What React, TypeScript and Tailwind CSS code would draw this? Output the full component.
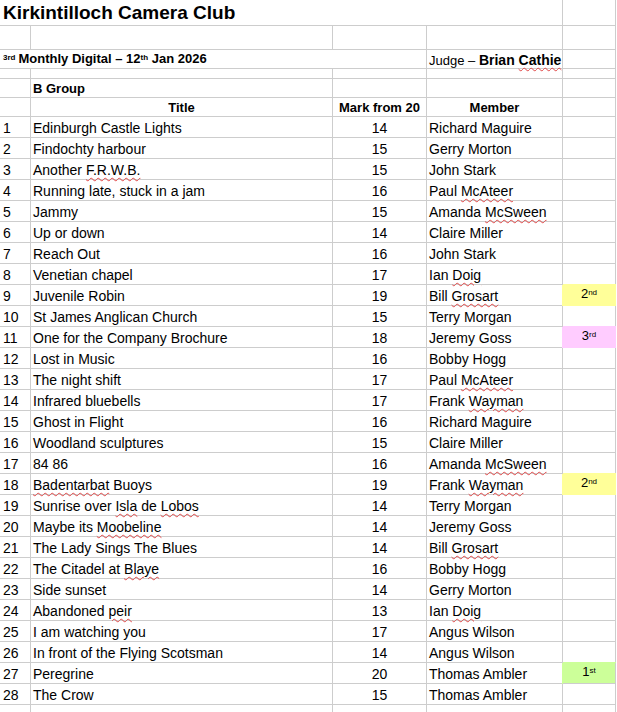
import type { ReactNode } from 'react';

type Entry = {
  title: string;
  mark: number;
  member: string;
  place?: 'first' | 'second' | 'third';
};

const ENTRIES: Entry[] = [
  { title: 'Edinburgh Castle Lights', mark: 14, member: 'Richard Maguire' },
  { title: 'Findochty harbour', mark: 15, member: 'Gerry Morton' },
  { title: 'Another F.R.W.B.', mark: 15, member: 'John Stark' },
  { title: 'Running late, stuck in a jam', mark: 16, member: 'Paul McAteer' },
  { title: 'Jammy', mark: 15, member: 'Amanda McSween' },
  { title: 'Up or down', mark: 14, member: 'Claire Miller' },
  { title: 'Reach Out', mark: 16, member: 'John Stark' },
  { title: 'Venetian chapel', mark: 17, member: 'Ian Doig' },
  { title: 'Juvenile Robin', mark: 19, member: 'Bill Grosart', place: 'second' },
  { title: 'St James Anglican Church', mark: 15, member: 'Terry Morgan' },
  { title: 'One for the Company Brochure', mark: 18, member: 'Jeremy Goss', place: 'third' },
  { title: 'Lost in Music', mark: 16, member: 'Bobby Hogg' },
  { title: 'The night shift', mark: 17, member: 'Paul McAteer' },
  { title: 'Infrared bluebells', mark: 17, member: 'Frank Wayman' },
  { title: 'Ghost in Flight', mark: 16, member: 'Richard Maguire' },
  { title: 'Woodland sculptures', mark: 15, member: 'Claire Miller' },
  { title: '84 86', mark: 16, member: 'Amanda McSween' },
  { title: 'Badentarbat Buoys', mark: 19, member: 'Frank Wayman', place: 'second' },
  { title: 'Sunrise over Isla de Lobos', mark: 14, member: 'Terry Morgan' },
  { title: 'Maybe its Moobeline', mark: 14, member: 'Jeremy Goss' },
  { title: 'The Lady Sings The Blues', mark: 14, member: 'Bill Grosart' },
  { title: 'The Citadel at Blaye', mark: 16, member: 'Bobby Hogg' },
  { title: 'Side sunset', mark: 14, member: 'Gerry Morton' },
  { title: 'Abandoned peir', mark: 13, member: 'Ian Doig' },
  { title: 'I am watching you', mark: 17, member: 'Angus Wilson' },
  { title: 'In front of the Flying Scotsman', mark: 14, member: 'Angus Wilson' },
  { title: 'Peregrine', mark: 20, member: 'Thomas Ambler', place: 'first' },
  { title: 'The Crow', mark: 15, member: 'Thomas Ambler' },
];

// words the spell checker flags with a red squiggle
const MISSPELT = new Set([
  'F.R.W.B.',
  'McAteer',
  'McSween',
  'Doig',
  'Grosart',
  'Wayman',
  'Badentarbat',
  'Isla',
  'Lobos',
  'Moobeline',
  'Blaye',
  'peir',
  'Cathie',
]);

const squiggle =
  'underline decoration-wavy decoration-[#e04848] decoration-1 underline-offset-[2px]';

function Marked({ text }: { text: string }) {
  const words = text.split(' ');
  return (
    <span>
      {words.map((w, i) => (
        <span key={i}>
          {i > 0 ? ' ' : ''}
          {MISSPELT.has(w) ? <span className={squiggle}>{w}</span> : w}
        </span>
      ))}
    </span>
  );
}

function Sup({ children }: { children: ReactNode }) {
  return <span className="relative -top-[3px] text-[8px]">{children}</span>;
}

const PLACES = {
  first: { n: '1', suffix: 'st', cls: 'bg-[#ccff99] border-[#ccff99] shadow-[0_-1px_0_#ccff99,-1px_0_0_#ccff99]' },
  second: { n: '2', suffix: 'nd', cls: 'bg-[#ffff99] border-[#ffff99] shadow-[0_-1px_0_#ffff99,-1px_0_0_#ffff99]' },
  third: { n: '3', suffix: 'rd', cls: 'bg-[#ffccff] border-[#ffccff] shadow-[0_-1px_0_#ffccff,-1px_0_0_#ffccff]' },
};

const cell = 'flex items-end whitespace-nowrap border-r border-b border-[#cdcdcd]';

export default function App() {
  return (
    <div className="min-h-[712px] w-[617px] overflow-hidden bg-white font-['Liberation_Sans',Arial,sans-serif] text-black">
      <div className="grid w-[616px] grid-cols-[31px_302px_94px_136px_53px]">
        {/* row 1: club name */}
        <div className={`${cell} col-span-4 h-[26px] pb-px pl-[3px] text-[19px] font-bold leading-[22px]`}>
          Kirkintilloch Camera Club
        </div>
        <div className={`${cell} h-[26px]`} />

        {/* row 2: blank */}
        {[0, 1, 2, 3, 4].map((i) => (
          <div key={`b2-${i}`} className={`${cell} h-[24px]`} />
        ))}

        {/* row 3: competition + judge */}
        <div className={`${cell} col-span-3 h-[19px] pl-[3px] text-[13px] font-bold leading-[15px]`}>
          <span>
            <Sup>3rd</Sup>
            <span className="ml-[3px]">
              Monthly Digital – 12<Sup>th</Sup> Jan 2026
            </span>
          </span>
        </div>
        <div className={`${cell} h-[19px] pl-[2px] text-[13px] leading-[15px]`}>
          <span>
            Judge –{' '}
            <span className="text-[14px] font-bold">
              Brian <span className={squiggle}>Cathie</span>
            </span>
          </span>
        </div>
        <div className={`${cell} h-[19px]`} />

        {/* row 4: thin spacer */}
        {[0, 1, 2, 3, 4].map((i) => (
          <div key={`b4-${i}`} className={`${cell} h-[10px]`} />
        ))}

        {/* row 5: group */}
        <div className={`${cell} h-[19px]`} />
        <div className={`${cell} h-[19px] pb-px pl-[2px] text-[13px] font-bold leading-[15px]`}>B Group</div>
        <div className={`${cell} h-[19px]`} />
        <div className={`${cell} h-[19px]`} />
        <div className={`${cell} h-[19px]`} />

        {/* row 6: column heads */}
        <div className={`${cell} h-[19px]`} />
        <div className={`${cell} h-[19px] justify-center pb-px text-[13px] font-bold leading-[15px]`}>Title</div>
        <div className={`${cell} h-[19px] justify-center pb-px text-[13px] font-bold leading-[15px]`}>Mark from 20</div>
        <div className={`${cell} h-[19px] justify-center pb-px text-[13px] font-bold leading-[15px]`}>Member</div>
        <div className={`${cell} h-[19px]`} />

        {ENTRIES.map((e, i) => {
          const place = e.place ? PLACES[e.place] : null;
          return (
            <div key={i} className="contents text-[14px] leading-4">
              <div className={`${cell} h-[21px] pb-px pl-[3px]`}>{i + 1}</div>
              <div className={`${cell} h-[21px] pb-px pl-[2px]`}>
                <Marked text={e.title} />
              </div>
              <div className={`${cell} h-[21px] justify-center pb-px`}>{e.mark}</div>
              <div className={`${cell} h-[21px] pb-px pl-[2px]`}>
                <Marked text={e.member} />
              </div>
              {place ? (
                <div className={`${cell} ${place.cls} h-[21px] justify-center pb-[2px] text-[13px] leading-[15px]`}>
                  <span>
                    {place.n}
                    <Sup>{place.suffix}</Sup>
                  </span>
                </div>
              ) : (
                <div className={`${cell} h-[21px]`} />
              )}
            </div>
          );
        })}

        {/* trailing empty row, cut by the window */}
        {[0, 1, 2, 3, 4].map((i) => (
          <div key={`end-${i}`} className={`${cell} h-[21px]`} />
        ))}
      </div>
    </div>
  );
}
